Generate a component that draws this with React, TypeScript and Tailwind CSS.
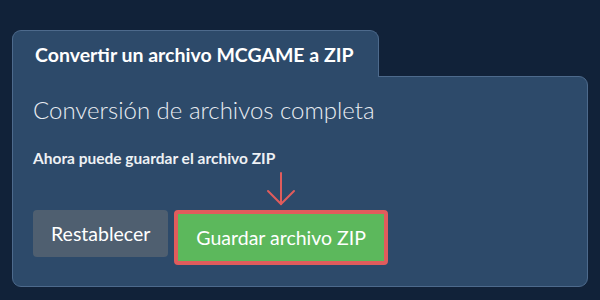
const App = () => {
    return (
        <div
            className="w-[600px] h-[300px] bg-[#112239] pl-[12px] pt-[30px]"
            style={{ fontFamily: "Lato, 'Noto Sans', sans-serif" }}
        >
            {/* Pestaña */}
            <div className="relative z-10 -mb-px flex h-[47px] w-[367px] items-center rounded-t-[9px] border border-b-0 border-[#4d6a8c] bg-[#2d4a6a] pl-[22px] pt-[2px]">
                <h3 className="text-[19.5px] font-bold text-white">Convertir un archivo MCGAME a ZIP</h3>
            </div>

            {/* Panel */}
            <div className="h-[211px] w-[576px] rounded-b-[9px] rounded-tr-[9px] border border-[#4d6a8c] bg-[#2d4a6a] pl-[20px] pt-[18px]">
                <h2 className="text-[24px] font-light leading-[30px] text-[#e9edf2]">Conversión de archivos completa</h2>
                <p className="mt-[23px] text-[15.5px] font-bold leading-[20px] text-[#eef1f4]">
                    Ahora puede guardar el archivo ZIP
                </p>

                <div className="mt-[42px] flex items-start gap-[6px]">
                    <button className="h-[47px] rounded-[4px] bg-[#4f5f70] px-[18px] text-[19.5px] text-white">
                        Restablecer
                    </button>

                    {/* Botón resaltado */}
                    <div className="relative">
                        <svg
                            className="absolute bottom-full left-1/2 mb-[4px] h-[34px] w-[30px] -translate-x-1/2 text-[#e05c5c]"
                            viewBox="0 0 30 34"
                            fill="none"
                            stroke="currentColor"
                            strokeWidth={2}
                            strokeLinecap="round"
                        >
                            <path d="M15 1v31" />
                            <path d="M2 19l13 13 13-13" />
                        </svg>
                        <button className="h-[55px] rounded-[4px] border-4 border-[#e05c5c] bg-[#5cb85c] px-[18px] text-[19.5px] text-white">
                            Guardar archivo ZIP
                        </button>
                    </div>
                </div>
            </div>
        </div>
    );
};

export default App;
